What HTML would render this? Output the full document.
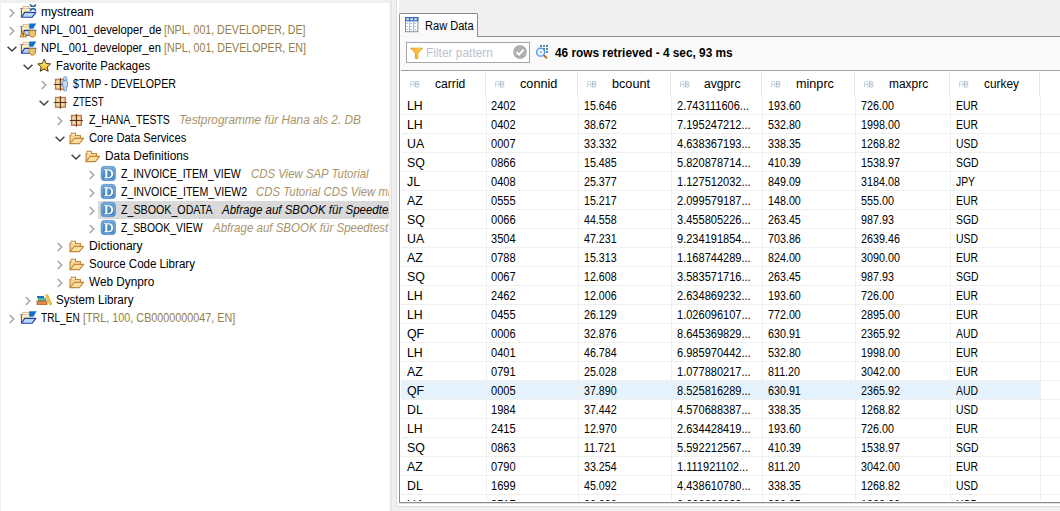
<!DOCTYPE html><html><head><meta charset="utf-8"><style>
html,body{margin:0;padding:0;}
body{width:1060px;height:511px;overflow:hidden;position:relative;background:#f0f0f0;font-family:"Liberation Sans", sans-serif;}
.t{position:absolute;white-space:pre;line-height:20px;transform-origin:0 0;}
svg{overflow:visible}

</style></head><body>
<div style="position:absolute;left:1px;top:3px;width:388px;height:508px;background:#fff;overflow:hidden">
<svg style="position:absolute;left:7px;top:4.1px" width="8" height="12" viewBox="0 0 8 12"><path d="M1.8 1.9L5.7 6L1.8 10.1" fill="none" stroke="#a6a6a6" stroke-width="1.5"/></svg>
<svg style="position:absolute;left:19px;top:1px" width="17" height="17" viewBox="0 0 17 17"><path d="M0.2 4.6h10.3" stroke="#8a7094" stroke-width="1"/>
<path d="M1.4 13.2V5.1h9.2v4" fill="#fdeeb6"/>
<path d="M3 4.6V2.4h6v2.2" fill="#fffaf0" stroke="#d8b070" stroke-width="0.9"/>
<path d="M1.4 5.2v8" stroke="#3848b0" stroke-width="1"/>
<path d="M1.6 13.3L4.6 8.4H15.9L12 13.3Z" fill="#b4daf8" stroke="#2838a8" stroke-width="1.1" stroke-linejoin="round"/><path d="M10.4 0.2C10.4 3.1 15.6 3.1 15.6 0.2M10.4 7C10.4 4 15.6 4 15.6 7" fill="none" stroke="#1a5a98" stroke-width="1.4"/></svg>
<div class="t" style="left:39.89px;top:-1.16px;font-size:12px;color:#000;font-weight:normal;font-style:normal;transform:scaleX(1.0027);">mystream</div>
<svg style="position:absolute;left:7px;top:22.1px" width="8" height="12" viewBox="0 0 8 12"><path d="M1.8 1.9L5.7 6L1.8 10.1" fill="none" stroke="#a6a6a6" stroke-width="1.5"/></svg>
<svg style="position:absolute;left:19px;top:19px" width="17" height="17" viewBox="0 0 17 17"><path d="M0.2 4.6h10.3" stroke="#8a7094" stroke-width="1"/>
<path d="M1.4 13.2V5.1h9.2v4" fill="#fdeeb6"/>
<path d="M3 4.6V2.4h6v2.2" fill="#fffaf0" stroke="#d8b070" stroke-width="0.9"/>
<path d="M1.4 5.2v8" stroke="#3848b0" stroke-width="1"/>
<path d="M1.6 13.3L4.6 8.4H15.9L12 13.3Z" fill="#b4daf8" stroke="#2838a8" stroke-width="1.1" stroke-linejoin="round"/><path d="M9.3 1.4H16.2L13.2 6.8H9.3Z" fill="#0a70c8"/><path d="M9.1 8.5h6.5v3.8q-0.5 2.2-3.25 3.1q-2.75-0.9-3.25-3.1z" fill="#f0c460" stroke="#b07820" stroke-width="0.9"/><path d="M12.6 11.6L14.6 9.4" stroke="#a8c8e8" stroke-width="0.9"/><path d="M3.2 8.6L6.6 15H-0.2Z" fill="#f6cc60" stroke="#b8802a" stroke-width="0.9" stroke-linejoin="round"/><path d="M3.2 10.6v2.4M3.2 13.4v0.9" stroke="#333" stroke-width="1"/></svg>
<div class="t" style="left:39.75px;top:16.84px;font-size:12px;color:#000;font-weight:normal;font-style:normal;transform:scaleX(0.9310);">NPL_001_developer_de</div>
<div class="t" style="left:163.28px;top:16.84px;font-size:12px;color:rgb(149,125,71);font-weight:normal;font-style:normal;transform:scaleX(0.8840);">[NPL, 001, DEVELOPER, DE]</div>
<svg style="position:absolute;left:5px;top:41.6px" width="12" height="8" viewBox="0 0 12 8"><path d="M1.6 1.8L6 6L10.4 1.8" fill="none" stroke="#404040" stroke-width="1.5"/></svg>
<svg style="position:absolute;left:19px;top:37px" width="17" height="17" viewBox="0 0 17 17"><path d="M0.2 4.6h10.3" stroke="#8a7094" stroke-width="1"/>
<path d="M1.4 13.2V5.1h9.2v4" fill="#fdeeb6"/>
<path d="M3 4.6V2.4h6v2.2" fill="#fffaf0" stroke="#d8b070" stroke-width="0.9"/>
<path d="M1.4 5.2v8" stroke="#3848b0" stroke-width="1"/>
<path d="M1.6 13.3L4.6 8.4H15.9L12 13.3Z" fill="#b4daf8" stroke="#2838a8" stroke-width="1.1" stroke-linejoin="round"/><path d="M9.3 1.4H16.2L13.2 6.8H9.3Z" fill="#0a70c8"/><path d="M9.1 8.5h6.5v3.8q-0.5 2.2-3.25 3.1q-2.75-0.9-3.25-3.1z" fill="#f0c460" stroke="#b07820" stroke-width="0.9"/><path d="M12.6 11.6L14.6 9.4" stroke="#a8c8e8" stroke-width="0.9"/></svg>
<div class="t" style="left:39.75px;top:34.84px;font-size:12px;color:#000;font-weight:normal;font-style:normal;transform:scaleX(0.9258);">NPL_001_developer_en</div>
<div class="t" style="left:163.38px;top:34.84px;font-size:12px;color:rgb(149,125,71);font-weight:normal;font-style:normal;transform:scaleX(0.8871);">[NPL, 001, DEVELOPER, EN]</div>
<svg style="position:absolute;left:21px;top:59.599999999999994px" width="12" height="8" viewBox="0 0 12 8"><path d="M1.6 1.8L6 6L10.4 1.8" fill="none" stroke="#404040" stroke-width="1.5"/></svg>
<svg style="position:absolute;left:35px;top:55px" width="16" height="16" viewBox="0 0 16 16"><defs><linearGradient id="gS" x1="0" y1="0" x2="0" y2="1"><stop offset="0" stop-color="#fff27a"/><stop offset="0.6" stop-color="#f8d040"/><stop offset="1" stop-color="#e8981c"/></linearGradient></defs>
<path d="M8.2 1.2L10.1 5.5L14.6 5.9L11.2 8.9L12.2 13.3L8.2 11L4.2 13.3L5.2 8.9L1.8 5.9L6.3 5.5Z" fill="url(#gS)" stroke="#4a3a1c" stroke-width="1" stroke-linejoin="round"/></svg>
<div class="t" style="left:55.43px;top:52.84px;font-size:12px;color:#000;font-weight:normal;font-style:normal;transform:scaleX(0.9472);">Favorite Packages</div>
<svg style="position:absolute;left:39px;top:76.1px" width="8" height="12" viewBox="0 0 8 12"><path d="M1.8 1.9L5.7 6L1.8 10.1" fill="none" stroke="#a6a6a6" stroke-width="1.5"/></svg>
<svg style="position:absolute;left:51px;top:73px" width="17" height="16" viewBox="0 0 17 16"><defs><radialGradient id="gQ" cx="0.5" cy="0.5" r="0.65"><stop offset="0" stop-color="#fcecbc"/><stop offset="1" stop-color="#dca874"/></radialGradient></defs>
<rect x="3.4" y="3.3" width="10" height="10" fill="#c88a5a"/>
<rect x="3.9" y="3.8" width="4.5" height="4.6" fill="url(#gQ)"/><rect x="8.4" y="3.8" width="4.5" height="4.6" fill="url(#gQ)"/>
<rect x="3.9" y="8.4" width="4.5" height="4.5" fill="url(#gQ)"/><rect x="8.4" y="8.4" width="4.5" height="4.5" fill="url(#gQ)"/>
<rect x="3.4" y="3.3" width="10" height="10" fill="none" stroke="#b87448" stroke-width="1"/>
<path d="M8.4 2V14.7M1.9 8.4H14.9" stroke="#5e3418" stroke-width="1.05"/><circle cx="13.1" cy="2.6" r="1.9" fill="#c4dcf4" stroke="#5a8ac8" stroke-width="0.8"/>
<path d="M10.6 6.2q0-1.6 1.6-1.6h1.8q1.6 0 1.6 1.6v4.2h-1.2v4.4h-2.6v-4.4h-1.2z" fill="#c4dcf4" stroke="#5a8ac8" stroke-width="0.8"/></svg>
<div class="t" style="left:72.00px;top:70.84px;font-size:12px;color:#000;font-weight:normal;font-style:normal;transform:scaleX(0.8890);">$TMP - DEVELOPER</div>
<svg style="position:absolute;left:37px;top:95.6px" width="12" height="8" viewBox="0 0 12 8"><path d="M1.6 1.8L6 6L10.4 1.8" fill="none" stroke="#404040" stroke-width="1.5"/></svg>
<svg style="position:absolute;left:51px;top:91px" width="17" height="16" viewBox="0 0 17 16"><defs><radialGradient id="gQ" cx="0.5" cy="0.5" r="0.65"><stop offset="0" stop-color="#fcecbc"/><stop offset="1" stop-color="#dca874"/></radialGradient></defs>
<rect x="3.4" y="3.3" width="10" height="10" fill="#c88a5a"/>
<rect x="3.9" y="3.8" width="4.5" height="4.6" fill="url(#gQ)"/><rect x="8.4" y="3.8" width="4.5" height="4.6" fill="url(#gQ)"/>
<rect x="3.9" y="8.4" width="4.5" height="4.5" fill="url(#gQ)"/><rect x="8.4" y="8.4" width="4.5" height="4.5" fill="url(#gQ)"/>
<rect x="3.4" y="3.3" width="10" height="10" fill="none" stroke="#b87448" stroke-width="1"/>
<path d="M8.4 2V14.7M1.9 8.4H14.9" stroke="#5e3418" stroke-width="1.05"/></svg>
<div class="t" style="left:72.03px;top:88.84px;font-size:12px;color:#000;font-weight:normal;font-style:normal;transform:scaleX(0.8096);">ZTEST</div>
<svg style="position:absolute;left:55px;top:112.1px" width="8" height="12" viewBox="0 0 8 12"><path d="M1.8 1.9L5.7 6L1.8 10.1" fill="none" stroke="#a6a6a6" stroke-width="1.5"/></svg>
<svg style="position:absolute;left:67px;top:109px" width="17" height="16" viewBox="0 0 17 16"><defs><radialGradient id="gQ" cx="0.5" cy="0.5" r="0.65"><stop offset="0" stop-color="#fcecbc"/><stop offset="1" stop-color="#dca874"/></radialGradient></defs>
<rect x="3.4" y="3.3" width="10" height="10" fill="#c88a5a"/>
<rect x="3.9" y="3.8" width="4.5" height="4.6" fill="url(#gQ)"/><rect x="8.4" y="3.8" width="4.5" height="4.6" fill="url(#gQ)"/>
<rect x="3.9" y="8.4" width="4.5" height="4.5" fill="url(#gQ)"/><rect x="8.4" y="8.4" width="4.5" height="4.5" fill="url(#gQ)"/>
<rect x="3.4" y="3.3" width="10" height="10" fill="none" stroke="#b87448" stroke-width="1"/>
<path d="M8.4 2V14.7M1.9 8.4H14.9" stroke="#5e3418" stroke-width="1.05"/></svg>
<div class="t" style="left:88.01px;top:106.84px;font-size:12px;color:#000;font-weight:normal;font-style:normal;transform:scaleX(0.8720);">Z_HANA_TESTS</div>
<div class="t" style="left:178.00px;top:106.84px;font-size:12px;color:rgb(168,148,104);font-weight:normal;font-style:italic;transform:scaleX(0.9832);">Testprogramme für Hana als 2. DB</div>
<svg style="position:absolute;left:53px;top:131.6px" width="12" height="8" viewBox="0 0 12 8"><path d="M1.6 1.8L6 6L10.4 1.8" fill="none" stroke="#404040" stroke-width="1.5"/></svg>
<svg style="position:absolute;left:67px;top:127px" width="16" height="16" viewBox="0 0 16 16"><path d="M2 13.5V5.5h1.2V3.2h4.3v2.3h5v3" fill="#f4d692" stroke="#c4883c" stroke-width="1.1"/>
<path d="M3.3 4.2h3.5v1.2h-3.5z" fill="#fff6dc"/>
<path d="M1.8 13.6L6.4 8.4H15.6L11.4 13.6Z" fill="#f9e0a0" stroke="#c4883c" stroke-width="1.1" stroke-linejoin="round"/></svg>
<div class="t" style="left:87.77px;top:124.84px;font-size:12px;color:#000;font-weight:normal;font-style:normal;transform:scaleX(0.9347);">Core Data Services</div>
<svg style="position:absolute;left:69px;top:149.6px" width="12" height="8" viewBox="0 0 12 8"><path d="M1.6 1.8L6 6L10.4 1.8" fill="none" stroke="#404040" stroke-width="1.5"/></svg>
<svg style="position:absolute;left:83px;top:145px" width="16" height="16" viewBox="0 0 16 16"><path d="M2 13.5V5.5h1.2V3.2h4.3v2.3h5v3" fill="#f4d692" stroke="#c4883c" stroke-width="1.1"/>
<path d="M3.3 4.2h3.5v1.2h-3.5z" fill="#fff6dc"/>
<path d="M1.8 13.6L6.4 8.4H15.6L11.4 13.6Z" fill="#f9e0a0" stroke="#c4883c" stroke-width="1.1" stroke-linejoin="round"/></svg>
<div class="t" style="left:104.10px;top:142.84px;font-size:12px;color:#000;font-weight:normal;font-style:normal;transform:scaleX(0.9890);">Data Definitions</div>
<svg style="position:absolute;left:87px;top:166.1px" width="8" height="12" viewBox="0 0 8 12"><path d="M1.8 1.9L5.7 6L1.8 10.1" fill="none" stroke="#a6a6a6" stroke-width="1.5"/></svg>
<svg style="position:absolute;left:99px;top:163px" width="16" height="16" viewBox="0 0 16 16"><defs><linearGradient id="gD" x1="0" y1="0" x2="0" y2="1"><stop offset="0" stop-color="#6aa6d8"/><stop offset="0.5" stop-color="#4c8cc8"/><stop offset="1" stop-color="#3a7cc0"/></linearGradient></defs>
<rect x="1.2" y="0.4" width="14.2" height="14.2" rx="3.2" fill="url(#gD)" stroke="#5a94c8" stroke-width="0.9"/>
<rect x="2.3" y="1.5" width="12" height="12" rx="2.4" fill="none" stroke="#8cbce0" stroke-width="0.7" opacity="0.8"/>
<path d="M4 3.2h4.6c3 0 4.6 1.9 4.6 4.5s-1.6 4.6-4.6 4.6H4v-0.9h1.3V4.1H4z M7.3 4.2v7.1h1.1c1.9 0 2.8-1.4 2.8-3.6S10.3 4.2 8.4 4.2z" fill="#fff"/></svg>
<div class="t" style="left:119.61px;top:160.84px;font-size:12px;color:#000;font-weight:normal;font-style:normal;transform:scaleX(0.8809);">Z_INVOICE_ITEM_VIEW</div>
<div class="t" style="left:249.53px;top:160.84px;font-size:12px;color:rgb(168,148,104);font-weight:normal;font-style:italic;transform:scaleX(0.9496);">CDS View SAP Tutorial</div>
<svg style="position:absolute;left:87px;top:184.1px" width="8" height="12" viewBox="0 0 8 12"><path d="M1.8 1.9L5.7 6L1.8 10.1" fill="none" stroke="#a6a6a6" stroke-width="1.5"/></svg>
<svg style="position:absolute;left:99px;top:181px" width="16" height="16" viewBox="0 0 16 16"><defs><linearGradient id="gD" x1="0" y1="0" x2="0" y2="1"><stop offset="0" stop-color="#6aa6d8"/><stop offset="0.5" stop-color="#4c8cc8"/><stop offset="1" stop-color="#3a7cc0"/></linearGradient></defs>
<rect x="1.2" y="0.4" width="14.2" height="14.2" rx="3.2" fill="url(#gD)" stroke="#5a94c8" stroke-width="0.9"/>
<rect x="2.3" y="1.5" width="12" height="12" rx="2.4" fill="none" stroke="#8cbce0" stroke-width="0.7" opacity="0.8"/>
<path d="M4 3.2h4.6c3 0 4.6 1.9 4.6 4.5s-1.6 4.6-4.6 4.6H4v-0.9h1.3V4.1H4z M7.3 4.2v7.1h1.1c1.9 0 2.8-1.4 2.8-3.6S10.3 4.2 8.4 4.2z" fill="#fff"/></svg>
<div class="t" style="left:119.61px;top:178.84px;font-size:12px;color:#000;font-weight:normal;font-style:normal;transform:scaleX(0.8846);">Z_INVOICE_ITEM_VIEW2</div>
<div class="t" style="left:255.33px;top:178.84px;font-size:12px;color:rgb(168,148,104);font-weight:normal;font-style:italic;transform:scaleX(0.9496);">CDS Tutorial CDS View mit Assoziation</div>
<div style="position:absolute;left:97px;top:198px;width:291px;height:18px;background:#d9d9d9;"></div>
<svg style="position:absolute;left:87px;top:202.1px" width="8" height="12" viewBox="0 0 8 12"><path d="M1.8 1.9L5.7 6L1.8 10.1" fill="none" stroke="#a6a6a6" stroke-width="1.5"/></svg>
<svg style="position:absolute;left:99px;top:199px" width="16" height="16" viewBox="0 0 16 16"><defs><linearGradient id="gD" x1="0" y1="0" x2="0" y2="1"><stop offset="0" stop-color="#6aa6d8"/><stop offset="0.5" stop-color="#4c8cc8"/><stop offset="1" stop-color="#3a7cc0"/></linearGradient></defs>
<rect x="1.2" y="0.4" width="14.2" height="14.2" rx="3.2" fill="url(#gD)" stroke="#5a94c8" stroke-width="0.9"/>
<rect x="2.3" y="1.5" width="12" height="12" rx="2.4" fill="none" stroke="#8cbce0" stroke-width="0.7" opacity="0.8"/>
<path d="M4 3.2h4.6c3 0 4.6 1.9 4.6 4.5s-1.6 4.6-4.6 4.6H4v-0.9h1.3V4.1H4z M7.3 4.2v7.1h1.1c1.9 0 2.8-1.4 2.8-3.6S10.3 4.2 8.4 4.2z" fill="#fff"/></svg>
<div class="t" style="left:119.61px;top:196.84px;font-size:12px;color:#000;font-weight:normal;font-style:normal;transform:scaleX(0.8892);">Z_SBOOK_ODATA</div>
<div class="t" style="left:221.49px;top:196.84px;font-size:12px;color:#000;font-weight:normal;font-style:italic;transform:scaleX(0.9590);">Abfrage auf SBOOK für Speedtest</div>
<svg style="position:absolute;left:87px;top:220.1px" width="8" height="12" viewBox="0 0 8 12"><path d="M1.8 1.9L5.7 6L1.8 10.1" fill="none" stroke="#a6a6a6" stroke-width="1.5"/></svg>
<svg style="position:absolute;left:99px;top:217px" width="16" height="16" viewBox="0 0 16 16"><defs><linearGradient id="gD" x1="0" y1="0" x2="0" y2="1"><stop offset="0" stop-color="#6aa6d8"/><stop offset="0.5" stop-color="#4c8cc8"/><stop offset="1" stop-color="#3a7cc0"/></linearGradient></defs>
<rect x="1.2" y="0.4" width="14.2" height="14.2" rx="3.2" fill="url(#gD)" stroke="#5a94c8" stroke-width="0.9"/>
<rect x="2.3" y="1.5" width="12" height="12" rx="2.4" fill="none" stroke="#8cbce0" stroke-width="0.7" opacity="0.8"/>
<path d="M4 3.2h4.6c3 0 4.6 1.9 4.6 4.5s-1.6 4.6-4.6 4.6H4v-0.9h1.3V4.1H4z M7.3 4.2v7.1h1.1c1.9 0 2.8-1.4 2.8-3.6S10.3 4.2 8.4 4.2z" fill="#fff"/></svg>
<div class="t" style="left:119.61px;top:214.84px;font-size:12px;color:#000;font-weight:normal;font-style:normal;transform:scaleX(0.8671);">Z_SBOOK_VIEW</div>
<div class="t" style="left:211.69px;top:214.84px;font-size:12px;color:rgb(168,148,104);font-weight:normal;font-style:italic;transform:scaleX(0.9590);">Abfrage auf SBOOK für Speedtest</div>
<svg style="position:absolute;left:55px;top:238.1px" width="8" height="12" viewBox="0 0 8 12"><path d="M1.8 1.9L5.7 6L1.8 10.1" fill="none" stroke="#a6a6a6" stroke-width="1.5"/></svg>
<svg style="position:absolute;left:67px;top:235px" width="16" height="16" viewBox="0 0 16 16"><path d="M2 13.5V5.5h1.2V3.2h4.3v2.3h5v3" fill="#f4d692" stroke="#c4883c" stroke-width="1.1"/>
<path d="M3.3 4.2h3.5v1.2h-3.5z" fill="#fff6dc"/>
<path d="M1.8 13.6L6.4 8.4H15.6L11.4 13.6Z" fill="#f9e0a0" stroke="#c4883c" stroke-width="1.1" stroke-linejoin="round"/></svg>
<div class="t" style="left:87.59px;top:232.84px;font-size:12px;color:#000;font-weight:normal;font-style:normal;transform:scaleX(1.0057);">Dictionary</div>
<svg style="position:absolute;left:55px;top:256.1px" width="8" height="12" viewBox="0 0 8 12"><path d="M1.8 1.9L5.7 6L1.8 10.1" fill="none" stroke="#a6a6a6" stroke-width="1.5"/></svg>
<svg style="position:absolute;left:67px;top:253px" width="16" height="16" viewBox="0 0 16 16"><path d="M2 13.5V5.5h1.2V3.2h4.3v2.3h5v3" fill="#f4d692" stroke="#c4883c" stroke-width="1.1"/>
<path d="M3.3 4.2h3.5v1.2h-3.5z" fill="#fff6dc"/>
<path d="M1.8 13.6L6.4 8.4H15.6L11.4 13.6Z" fill="#f9e0a0" stroke="#c4883c" stroke-width="1.1" stroke-linejoin="round"/></svg>
<div class="t" style="left:87.62px;top:250.84px;font-size:12px;color:#000;font-weight:normal;font-style:normal;transform:scaleX(0.9624);">Source Code Library</div>
<svg style="position:absolute;left:55px;top:274.1px" width="8" height="12" viewBox="0 0 8 12"><path d="M1.8 1.9L5.7 6L1.8 10.1" fill="none" stroke="#a6a6a6" stroke-width="1.5"/></svg>
<svg style="position:absolute;left:67px;top:271px" width="16" height="16" viewBox="0 0 16 16"><path d="M2 13.5V5.5h1.2V3.2h4.3v2.3h5v3" fill="#f4d692" stroke="#c4883c" stroke-width="1.1"/>
<path d="M3.3 4.2h3.5v1.2h-3.5z" fill="#fff6dc"/>
<path d="M1.8 13.6L6.4 8.4H15.6L11.4 13.6Z" fill="#f9e0a0" stroke="#c4883c" stroke-width="1.1" stroke-linejoin="round"/></svg>
<div class="t" style="left:88.35px;top:268.84px;font-size:12px;color:#000;font-weight:normal;font-style:normal;transform:scaleX(0.9827);">Web Dynpro</div>
<svg style="position:absolute;left:23px;top:292.1px" width="8" height="12" viewBox="0 0 8 12"><path d="M1.8 1.9L5.7 6L1.8 10.1" fill="none" stroke="#a6a6a6" stroke-width="1.5"/></svg>
<svg style="position:absolute;left:35px;top:289px" width="17" height="16" viewBox="0 0 17 16"><rect x="1" y="4" width="7" height="2.2" fill="#2070c0"/>
<rect x="2" y="6.2" width="8" height="2.9" fill="#30a070"/><rect x="3" y="7.2" width="6" height="0.9" fill="#80d0a8"/>
<rect x="1" y="9.1" width="10" height="3.4" fill="#e08a48" stroke="#b85a28" stroke-width="0.8"/>
<path d="M10.4 2.6L14.9 13" stroke="#e0a030" stroke-width="2.8"/><path d="M10.4 2.6L14.9 13" stroke="#f4c848" stroke-width="1.4"/></svg>
<div class="t" style="left:55.32px;top:286.84px;font-size:12px;color:#000;font-weight:normal;font-style:normal;transform:scaleX(0.9684);">System Library</div>
<svg style="position:absolute;left:7px;top:310.1px" width="8" height="12" viewBox="0 0 8 12"><path d="M1.8 1.9L5.7 6L1.8 10.1" fill="none" stroke="#a6a6a6" stroke-width="1.5"/></svg>
<svg style="position:absolute;left:19px;top:307px" width="17" height="17" viewBox="0 0 17 17"><path d="M0.2 4.6h10.3" stroke="#8a7094" stroke-width="1"/>
<path d="M1.4 13.2V5.1h9.2v4" fill="#fdeeb6"/>
<path d="M3 4.6V2.4h6v2.2" fill="#fffaf0" stroke="#d8b070" stroke-width="0.9"/>
<path d="M1.4 5.2v8" stroke="#3848b0" stroke-width="1"/>
<path d="M1.6 13.3L4.6 8.4H15.9L12 13.3Z" fill="#b4daf8" stroke="#2838a8" stroke-width="1.1" stroke-linejoin="round"/><path d="M9.3 1.2H16.6L13.4 6.8H9.3Z" fill="#0a70c8"/></svg>
<div class="t" style="left:40.26px;top:304.84px;font-size:12px;color:#000;font-weight:normal;font-style:normal;transform:scaleX(0.8415);">TRL_EN</div>
<div class="t" style="left:82.17px;top:304.84px;font-size:12px;color:rgb(149,125,71);font-weight:normal;font-style:normal;transform:scaleX(0.8988);">[TRL, 100, CB0000000047, EN]</div>
</div>
<div style="position:absolute;left:391px;top:0px;width:1px;height:511px;background:#e2e2e2;"></div>
<div style="position:absolute;left:396px;top:0px;width:1px;height:507px;background:#dcdcdc;"></div>
<div style="position:absolute;left:397px;top:0px;width:2px;height:506px;background:#ffffff;"></div>
<div style="position:absolute;left:396px;top:506px;width:664px;height:1px;background:#dcdcdc;"></div>
<div style="position:absolute;left:397px;top:503px;width:663px;height:3px;background:#ffffff;"></div>
<div style="position:absolute;left:399px;top:37px;width:661px;height:466px;background:#fafafa;"></div>
<div style="position:absolute;left:399px;top:13px;width:77px;height:23px;border:1px solid #8c8c8c;border-bottom:none;border-radius:2px 2px 0 0;background:linear-gradient(#ffffff,#f8f8f8)"></div>
<div style="position:absolute;left:477px;top:36px;width:583px;height:1px;background:#8c8c8c;"></div>
<div style="position:absolute;left:399px;top:15px;width:1px;height:488px;background:#8c8c8c;"></div>
<div style="position:absolute;left:400px;top:501px;width:660px;height:1px;background:#fff;"></div>
<div style="position:absolute;left:399px;top:502px;width:661px;height:1px;background:#8c8c8c;"></div>
<div style="position:absolute;left:400px;top:503px;width:660px;height:1px;background:#e0e0e0;"></div>
<svg style="position:absolute;left:405px;top:17px" width="14" height="16" viewBox="0 0 14 16"><rect x="0.5" y="0.5" width="12.4" height="14.2" fill="#fff" stroke="#8c8c8c" stroke-width="1"/>
<rect x="0" y="0" width="13.4" height="4.4" fill="#3f6fb6"/>
<rect x="1.4" y="1.3" width="2.5" height="1.9" fill="#dcecfc"/><rect x="5.4" y="1.3" width="2.5" height="1.9" fill="#dcecfc"/><rect x="9.3" y="1.3" width="2.5" height="1.9" fill="#dcecfc"/>
<path d="M4.6 4.4v10M8.6 4.4v10" stroke="#9cb4e4" stroke-width="1"/>
<path d="M1.2 6.5h2M5.2 6.5h2M9.2 6.5h2M1.2 9.5h2M5.2 9.5h2M9.2 9.5h2M1.2 12.5h2M5.2 12.5h2M9.2 12.5h2" stroke="#a8c0ea" stroke-width="1"/></svg>
<div class="t" style="left:424.84px;top:15.54px;font-size:12px;color:#000;font-weight:normal;font-style:normal;transform:scaleX(0.9215);">Raw Data</div>
<div style="position:absolute;left:406px;top:42px;width:122px;height:19px;border:1px solid #a5a5ab;background:#fff"></div>
<svg style="position:absolute;left:410px;top:47px" width="14" height="13" viewBox="0 0 14 13"><defs><linearGradient id="gF" x1="0" y1="0" x2="1" y2="0"><stop offset="0" stop-color="#ff9a40"/><stop offset="1" stop-color="#ffe030"/></linearGradient></defs>
<path d="M0.6 1.2H12.6L7.8 6.2V11.6H5.4V6.2Z" fill="url(#gF)" stroke="#dc9c18" stroke-width="0.9" stroke-linejoin="round"/><path d="M2.8 2.6L4 3.8" stroke="#fff" stroke-width="1" opacity="0.9"/><path d="M5 1.8H11" stroke="#ffd070" stroke-width="0.6"/></svg>
<div class="t" style="left:426.01px;top:42.74px;font-size:12px;color:#c0bece;font-weight:normal;font-style:normal;transform:scaleX(0.9940);">Filter pattern</div>
<svg style="position:absolute;left:513px;top:45px" width="14" height="14" viewBox="0 0 14 14"><circle cx="7" cy="7" r="6.9" fill="#b0b0b0"/><path d="M3.6 7.2L6 9.6L10.6 4.8" fill="none" stroke="#fff" stroke-width="2"/></svg>
<svg style="position:absolute;left:534px;top:44px" width="16" height="16" viewBox="0 0 16 16"><g fill="#5a86a8"><rect x="6" y="1" width="2" height="2"/><rect x="9" y="1" width="2" height="2"/><rect x="12" y="1" width="2" height="2"/>
<rect x="9" y="4" width="2" height="2"/><rect x="12" y="4" width="2" height="2"/><rect x="12" y="7" width="2" height="2"/><rect x="6" y="7" width="2" height="2"/></g>
<path d="M9.8 11.2L13 14.4" stroke="#b8702a" stroke-width="2"/>
<circle cx="6.6" cy="8.2" r="4" fill="rgba(220,240,255,0.6)" stroke="#4a90e2" stroke-width="1.3"/></svg>
<div class="t" style="left:555.19px;top:42.94px;font-size:12px;color:#000;font-weight:bold;font-style:normal;transform:scaleX(0.9864);">46 rows retrieved - 4 sec, 93 ms</div>
<div style="position:absolute;left:400px;top:70px;width:660px;height:431px;background:#fff;overflow:hidden">
<div style="position:absolute;left:1px;top:0px;width:659px;height:1px;background:#a0a0a0;"></div>
<div style="position:absolute;left:85px;top:2px;width:1px;height:24px;background:#e5e5e5;"></div>
<svg style="position:absolute;left:10px;top:11px" width="10" height="7" viewBox="0 0 10 7"><path d="M0.5 6V1.6Q0.5 0.5 1.6 0.5H2.9Q4 0.5 4 1.6V6M0.5 3.3H4" fill="none" stroke="#c2d4e0" stroke-width="1"/><path d="M5.5 0.5H7.8Q8.6 0.5 8.6 1.4V2.3Q8.6 3.1 7.8 3.1H5.5M5.5 3.1H8Q8.9 3.1 8.9 4V5.1Q8.9 6 8 6H5.5V0.5" fill="none" stroke="#acc4d2" stroke-width="1"/></svg>
<div class="t" style="left:34.81px;top:4.14px;font-size:12px;color:#000;font-weight:normal;font-style:normal;transform:scaleX(1.0114);">carrid</div>
<div style="position:absolute;left:177px;top:2px;width:1px;height:24px;background:#e5e5e5;"></div>
<svg style="position:absolute;left:95px;top:11px" width="10" height="7" viewBox="0 0 10 7"><path d="M0.5 6V1.6Q0.5 0.5 1.6 0.5H2.9Q4 0.5 4 1.6V6M0.5 3.3H4" fill="none" stroke="#c2d4e0" stroke-width="1"/><path d="M5.5 0.5H7.8Q8.6 0.5 8.6 1.4V2.3Q8.6 3.1 7.8 3.1H5.5M5.5 3.1H8Q8.9 3.1 8.9 4V5.1Q8.9 6 8 6H5.5V0.5" fill="none" stroke="#acc4d2" stroke-width="1"/></svg>
<div class="t" style="left:119.85px;top:4.14px;font-size:12px;color:#000;font-weight:normal;font-style:normal;transform:scaleX(1.0588);">connid</div>
<div style="position:absolute;left:270px;top:2px;width:1px;height:24px;background:#e5e5e5;"></div>
<svg style="position:absolute;left:187px;top:11px" width="10" height="7" viewBox="0 0 10 7"><path d="M0.5 6V1.6Q0.5 0.5 1.6 0.5H2.9Q4 0.5 4 1.6V6M0.5 3.3H4" fill="none" stroke="#c2d4e0" stroke-width="1"/><path d="M5.5 0.5H7.8Q8.6 0.5 8.6 1.4V2.3Q8.6 3.1 7.8 3.1H5.5M5.5 3.1H8Q8.9 3.1 8.9 4V5.1Q8.9 6 8 6H5.5V0.5" fill="none" stroke="#acc4d2" stroke-width="1"/></svg>
<div class="t" style="left:211.94px;top:4.14px;font-size:12px;color:#000;font-weight:normal;font-style:normal;transform:scaleX(1.0543);">bcount</div>
<div style="position:absolute;left:361px;top:2px;width:1px;height:24px;background:#e5e5e5;"></div>
<svg style="position:absolute;left:280px;top:11px" width="10" height="7" viewBox="0 0 10 7"><path d="M0.5 6V1.6Q0.5 0.5 1.6 0.5H2.9Q4 0.5 4 1.6V6M0.5 3.3H4" fill="none" stroke="#c2d4e0" stroke-width="1"/><path d="M5.5 0.5H7.8Q8.6 0.5 8.6 1.4V2.3Q8.6 3.1 7.8 3.1H5.5M5.5 3.1H8Q8.9 3.1 8.9 4V5.1Q8.9 6 8 6H5.5V0.5" fill="none" stroke="#acc4d2" stroke-width="1"/></svg>
<div class="t" style="left:304.48px;top:4.14px;font-size:12px;color:#000;font-weight:normal;font-style:normal;transform:scaleX(1.0127);">avgprc</div>
<div style="position:absolute;left:454px;top:2px;width:1px;height:24px;background:#e5e5e5;"></div>
<svg style="position:absolute;left:371px;top:11px" width="10" height="7" viewBox="0 0 10 7"><path d="M0.5 6V1.6Q0.5 0.5 1.6 0.5H2.9Q4 0.5 4 1.6V6M0.5 3.3H4" fill="none" stroke="#c2d4e0" stroke-width="1"/><path d="M5.5 0.5H7.8Q8.6 0.5 8.6 1.4V2.3Q8.6 3.1 7.8 3.1H5.5M5.5 3.1H8Q8.9 3.1 8.9 4V5.1Q8.9 6 8 6H5.5V0.5" fill="none" stroke="#acc4d2" stroke-width="1"/></svg>
<div class="t" style="left:395.82px;top:4.14px;font-size:12px;color:#000;font-weight:normal;font-style:normal;transform:scaleX(1.0535);">minprc</div>
<div style="position:absolute;left:549px;top:2px;width:1px;height:24px;background:#e5e5e5;"></div>
<svg style="position:absolute;left:464px;top:11px" width="10" height="7" viewBox="0 0 10 7"><path d="M0.5 6V1.6Q0.5 0.5 1.6 0.5H2.9Q4 0.5 4 1.6V6M0.5 3.3H4" fill="none" stroke="#c2d4e0" stroke-width="1"/><path d="M5.5 0.5H7.8Q8.6 0.5 8.6 1.4V2.3Q8.6 3.1 7.8 3.1H5.5M5.5 3.1H8Q8.9 3.1 8.9 4V5.1Q8.9 6 8 6H5.5V0.5" fill="none" stroke="#acc4d2" stroke-width="1"/></svg>
<div class="t" style="left:488.56px;top:4.14px;font-size:12px;color:#000;font-weight:normal;font-style:normal;transform:scaleX(0.9936);">maxprc</div>
<div style="position:absolute;left:639px;top:2px;width:1px;height:24px;background:#e5e5e5;"></div>
<svg style="position:absolute;left:559px;top:11px" width="10" height="7" viewBox="0 0 10 7"><path d="M0.5 6V1.6Q0.5 0.5 1.6 0.5H2.9Q4 0.5 4 1.6V6M0.5 3.3H4" fill="none" stroke="#c2d4e0" stroke-width="1"/><path d="M5.5 0.5H7.8Q8.6 0.5 8.6 1.4V2.3Q8.6 3.1 7.8 3.1H5.5M5.5 3.1H8Q8.9 3.1 8.9 4V5.1Q8.9 6 8 6H5.5V0.5" fill="none" stroke="#acc4d2" stroke-width="1"/></svg>
<div class="t" style="left:583.70px;top:4.14px;font-size:12px;color:#000;font-weight:normal;font-style:normal;transform:scaleX(0.9886);">curkey</div>
<div style="position:absolute;left:1px;top:311px;width:639px;height:18px;background:#e5f3ff;"></div>
<div style="position:absolute;left:1px;top:44px;width:659px;height:1px;background:#f0f0f0;"></div>
<div style="position:absolute;left:1px;top:63px;width:659px;height:1px;background:#f0f0f0;"></div>
<div style="position:absolute;left:1px;top:82px;width:659px;height:1px;background:#f0f0f0;"></div>
<div style="position:absolute;left:1px;top:101px;width:659px;height:1px;background:#f0f0f0;"></div>
<div style="position:absolute;left:1px;top:120px;width:659px;height:1px;background:#f0f0f0;"></div>
<div style="position:absolute;left:1px;top:139px;width:659px;height:1px;background:#f0f0f0;"></div>
<div style="position:absolute;left:1px;top:158px;width:659px;height:1px;background:#f0f0f0;"></div>
<div style="position:absolute;left:1px;top:177px;width:659px;height:1px;background:#f0f0f0;"></div>
<div style="position:absolute;left:1px;top:196px;width:659px;height:1px;background:#f0f0f0;"></div>
<div style="position:absolute;left:1px;top:215px;width:659px;height:1px;background:#f0f0f0;"></div>
<div style="position:absolute;left:1px;top:234px;width:659px;height:1px;background:#f0f0f0;"></div>
<div style="position:absolute;left:1px;top:253px;width:659px;height:1px;background:#f0f0f0;"></div>
<div style="position:absolute;left:1px;top:272px;width:659px;height:1px;background:#f0f0f0;"></div>
<div style="position:absolute;left:1px;top:291px;width:659px;height:1px;background:#f0f0f0;"></div>
<div style="position:absolute;left:1px;top:310px;width:659px;height:1px;background:#f0f0f0;"></div>
<div style="position:absolute;left:1px;top:329px;width:659px;height:1px;background:#f0f0f0;"></div>
<div style="position:absolute;left:1px;top:348px;width:659px;height:1px;background:#f0f0f0;"></div>
<div style="position:absolute;left:1px;top:367px;width:659px;height:1px;background:#f0f0f0;"></div>
<div style="position:absolute;left:1px;top:386px;width:659px;height:1px;background:#f0f0f0;"></div>
<div style="position:absolute;left:1px;top:405px;width:659px;height:1px;background:#f0f0f0;"></div>
<div style="position:absolute;left:1px;top:424px;width:659px;height:1px;background:#f0f0f0;"></div>
<div style="position:absolute;left:1px;top:443px;width:659px;height:1px;background:#f0f0f0;"></div>
<div style="position:absolute;left:86px;top:26px;width:1px;height:420px;background:#f0f0f0;"></div>
<div style="position:absolute;left:178px;top:26px;width:1px;height:420px;background:#f0f0f0;"></div>
<div style="position:absolute;left:271px;top:26px;width:1px;height:420px;background:#f0f0f0;"></div>
<div style="position:absolute;left:362px;top:26px;width:1px;height:420px;background:#f0f0f0;"></div>
<div style="position:absolute;left:455px;top:26px;width:1px;height:420px;background:#f0f0f0;"></div>
<div style="position:absolute;left:550px;top:26px;width:1px;height:420px;background:#f0f0f0;"></div>
<div style="position:absolute;left:640px;top:26px;width:1px;height:420px;background:#f0f0f0;"></div>
<div class="t" style="left:6.57px;top:25.84px;font-size:12px;color:#000;font-weight:normal;font-style:normal;transform:scaleX(1.0288);">LH</div>
<div class="t" style="left:91.34px;top:25.84px;font-size:12px;color:#000;font-weight:normal;font-style:normal;transform:scaleX(0.9222);">2402</div>
<div class="t" style="left:184.28px;top:25.84px;font-size:12px;color:#000;font-weight:normal;font-style:normal;transform:scaleX(0.8896);">15.646</div>
<div class="t" style="left:276.86px;top:25.84px;font-size:12px;color:#000;font-weight:normal;font-style:normal;transform:scaleX(0.9201);">2.743111606...</div>
<div class="t" style="left:368.03px;top:25.84px;font-size:12px;color:#000;font-weight:normal;font-style:normal;transform:scaleX(0.8947);">193.60</div>
<div class="t" style="left:461.18px;top:25.84px;font-size:12px;color:#000;font-weight:normal;font-style:normal;transform:scaleX(0.8960);">726.00</div>
<div class="t" style="left:555.90px;top:25.84px;font-size:12px;color:#000;font-weight:normal;font-style:normal;transform:scaleX(0.8658);">EUR</div>
<div class="t" style="left:6.57px;top:44.84px;font-size:12px;color:#000;font-weight:normal;font-style:normal;transform:scaleX(1.0288);">LH</div>
<div class="t" style="left:91.34px;top:44.84px;font-size:12px;color:#000;font-weight:normal;font-style:normal;transform:scaleX(0.9222);">0402</div>
<div class="t" style="left:184.28px;top:44.84px;font-size:12px;color:#000;font-weight:normal;font-style:normal;transform:scaleX(0.8896);">38.672</div>
<div class="t" style="left:276.86px;top:44.84px;font-size:12px;color:#000;font-weight:normal;font-style:normal;transform:scaleX(0.9201);">7.195247212...</div>
<div class="t" style="left:368.03px;top:44.84px;font-size:12px;color:#000;font-weight:normal;font-style:normal;transform:scaleX(0.8947);">532.80</div>
<div class="t" style="left:461.18px;top:44.84px;font-size:12px;color:#000;font-weight:normal;font-style:normal;transform:scaleX(0.8960);">1998.00</div>
<div class="t" style="left:555.90px;top:44.84px;font-size:12px;color:#000;font-weight:normal;font-style:normal;transform:scaleX(0.8658);">EUR</div>
<div class="t" style="left:6.57px;top:63.84px;font-size:12px;color:#000;font-weight:normal;font-style:normal;transform:scaleX(1.0288);">UA</div>
<div class="t" style="left:91.34px;top:63.84px;font-size:12px;color:#000;font-weight:normal;font-style:normal;transform:scaleX(0.9222);">0007</div>
<div class="t" style="left:184.28px;top:63.84px;font-size:12px;color:#000;font-weight:normal;font-style:normal;transform:scaleX(0.8896);">33.332</div>
<div class="t" style="left:276.86px;top:63.84px;font-size:12px;color:#000;font-weight:normal;font-style:normal;transform:scaleX(0.9201);">4.638367193...</div>
<div class="t" style="left:368.03px;top:63.84px;font-size:12px;color:#000;font-weight:normal;font-style:normal;transform:scaleX(0.8947);">338.35</div>
<div class="t" style="left:461.18px;top:63.84px;font-size:12px;color:#000;font-weight:normal;font-style:normal;transform:scaleX(0.8960);">1268.82</div>
<div class="t" style="left:555.90px;top:63.84px;font-size:12px;color:#000;font-weight:normal;font-style:normal;transform:scaleX(0.8658);">USD</div>
<div class="t" style="left:6.57px;top:82.84px;font-size:12px;color:#000;font-weight:normal;font-style:normal;transform:scaleX(1.0288);">SQ</div>
<div class="t" style="left:91.34px;top:82.84px;font-size:12px;color:#000;font-weight:normal;font-style:normal;transform:scaleX(0.9222);">0866</div>
<div class="t" style="left:184.28px;top:82.84px;font-size:12px;color:#000;font-weight:normal;font-style:normal;transform:scaleX(0.8896);">15.485</div>
<div class="t" style="left:276.86px;top:82.84px;font-size:12px;color:#000;font-weight:normal;font-style:normal;transform:scaleX(0.9201);">5.820878714...</div>
<div class="t" style="left:368.03px;top:82.84px;font-size:12px;color:#000;font-weight:normal;font-style:normal;transform:scaleX(0.8947);">410.39</div>
<div class="t" style="left:461.18px;top:82.84px;font-size:12px;color:#000;font-weight:normal;font-style:normal;transform:scaleX(0.8960);">1538.97</div>
<div class="t" style="left:555.90px;top:82.84px;font-size:12px;color:#000;font-weight:normal;font-style:normal;transform:scaleX(0.8658);">SGD</div>
<div class="t" style="left:6.57px;top:101.84px;font-size:12px;color:#000;font-weight:normal;font-style:normal;transform:scaleX(1.0288);">JL</div>
<div class="t" style="left:91.34px;top:101.84px;font-size:12px;color:#000;font-weight:normal;font-style:normal;transform:scaleX(0.9222);">0408</div>
<div class="t" style="left:184.28px;top:101.84px;font-size:12px;color:#000;font-weight:normal;font-style:normal;transform:scaleX(0.8896);">25.377</div>
<div class="t" style="left:276.86px;top:101.84px;font-size:12px;color:#000;font-weight:normal;font-style:normal;transform:scaleX(0.9201);">1.127512032...</div>
<div class="t" style="left:368.03px;top:101.84px;font-size:12px;color:#000;font-weight:normal;font-style:normal;transform:scaleX(0.8947);">849.09</div>
<div class="t" style="left:461.18px;top:101.84px;font-size:12px;color:#000;font-weight:normal;font-style:normal;transform:scaleX(0.8960);">3184.08</div>
<div class="t" style="left:555.90px;top:101.84px;font-size:12px;color:#000;font-weight:normal;font-style:normal;transform:scaleX(0.8658);">JPY</div>
<div class="t" style="left:6.57px;top:120.84px;font-size:12px;color:#000;font-weight:normal;font-style:normal;transform:scaleX(1.0288);">AZ</div>
<div class="t" style="left:91.34px;top:120.84px;font-size:12px;color:#000;font-weight:normal;font-style:normal;transform:scaleX(0.9222);">0555</div>
<div class="t" style="left:184.28px;top:120.84px;font-size:12px;color:#000;font-weight:normal;font-style:normal;transform:scaleX(0.8896);">15.217</div>
<div class="t" style="left:276.86px;top:120.84px;font-size:12px;color:#000;font-weight:normal;font-style:normal;transform:scaleX(0.9201);">2.099579187...</div>
<div class="t" style="left:368.03px;top:120.84px;font-size:12px;color:#000;font-weight:normal;font-style:normal;transform:scaleX(0.8947);">148.00</div>
<div class="t" style="left:461.18px;top:120.84px;font-size:12px;color:#000;font-weight:normal;font-style:normal;transform:scaleX(0.8960);">555.00</div>
<div class="t" style="left:555.90px;top:120.84px;font-size:12px;color:#000;font-weight:normal;font-style:normal;transform:scaleX(0.8658);">EUR</div>
<div class="t" style="left:6.57px;top:139.84px;font-size:12px;color:#000;font-weight:normal;font-style:normal;transform:scaleX(1.0288);">SQ</div>
<div class="t" style="left:91.34px;top:139.84px;font-size:12px;color:#000;font-weight:normal;font-style:normal;transform:scaleX(0.9222);">0066</div>
<div class="t" style="left:184.28px;top:139.84px;font-size:12px;color:#000;font-weight:normal;font-style:normal;transform:scaleX(0.8896);">44.558</div>
<div class="t" style="left:276.86px;top:139.84px;font-size:12px;color:#000;font-weight:normal;font-style:normal;transform:scaleX(0.9201);">3.455805226...</div>
<div class="t" style="left:368.03px;top:139.84px;font-size:12px;color:#000;font-weight:normal;font-style:normal;transform:scaleX(0.8947);">263.45</div>
<div class="t" style="left:461.18px;top:139.84px;font-size:12px;color:#000;font-weight:normal;font-style:normal;transform:scaleX(0.8960);">987.93</div>
<div class="t" style="left:555.90px;top:139.84px;font-size:12px;color:#000;font-weight:normal;font-style:normal;transform:scaleX(0.8658);">SGD</div>
<div class="t" style="left:6.57px;top:158.84px;font-size:12px;color:#000;font-weight:normal;font-style:normal;transform:scaleX(1.0288);">UA</div>
<div class="t" style="left:91.34px;top:158.84px;font-size:12px;color:#000;font-weight:normal;font-style:normal;transform:scaleX(0.9222);">3504</div>
<div class="t" style="left:184.28px;top:158.84px;font-size:12px;color:#000;font-weight:normal;font-style:normal;transform:scaleX(0.8896);">47.231</div>
<div class="t" style="left:276.86px;top:158.84px;font-size:12px;color:#000;font-weight:normal;font-style:normal;transform:scaleX(0.9201);">9.234191854...</div>
<div class="t" style="left:368.03px;top:158.84px;font-size:12px;color:#000;font-weight:normal;font-style:normal;transform:scaleX(0.8947);">703.86</div>
<div class="t" style="left:461.18px;top:158.84px;font-size:12px;color:#000;font-weight:normal;font-style:normal;transform:scaleX(0.8960);">2639.46</div>
<div class="t" style="left:555.90px;top:158.84px;font-size:12px;color:#000;font-weight:normal;font-style:normal;transform:scaleX(0.8658);">USD</div>
<div class="t" style="left:6.57px;top:177.84px;font-size:12px;color:#000;font-weight:normal;font-style:normal;transform:scaleX(1.0288);">AZ</div>
<div class="t" style="left:91.34px;top:177.84px;font-size:12px;color:#000;font-weight:normal;font-style:normal;transform:scaleX(0.9222);">0788</div>
<div class="t" style="left:184.28px;top:177.84px;font-size:12px;color:#000;font-weight:normal;font-style:normal;transform:scaleX(0.8896);">15.313</div>
<div class="t" style="left:276.86px;top:177.84px;font-size:12px;color:#000;font-weight:normal;font-style:normal;transform:scaleX(0.9201);">1.168744289...</div>
<div class="t" style="left:368.03px;top:177.84px;font-size:12px;color:#000;font-weight:normal;font-style:normal;transform:scaleX(0.8947);">824.00</div>
<div class="t" style="left:461.18px;top:177.84px;font-size:12px;color:#000;font-weight:normal;font-style:normal;transform:scaleX(0.8960);">3090.00</div>
<div class="t" style="left:555.90px;top:177.84px;font-size:12px;color:#000;font-weight:normal;font-style:normal;transform:scaleX(0.8658);">EUR</div>
<div class="t" style="left:6.57px;top:196.84px;font-size:12px;color:#000;font-weight:normal;font-style:normal;transform:scaleX(1.0288);">SQ</div>
<div class="t" style="left:91.34px;top:196.84px;font-size:12px;color:#000;font-weight:normal;font-style:normal;transform:scaleX(0.9222);">0067</div>
<div class="t" style="left:184.28px;top:196.84px;font-size:12px;color:#000;font-weight:normal;font-style:normal;transform:scaleX(0.8896);">12.608</div>
<div class="t" style="left:276.86px;top:196.84px;font-size:12px;color:#000;font-weight:normal;font-style:normal;transform:scaleX(0.9201);">3.583571716...</div>
<div class="t" style="left:368.03px;top:196.84px;font-size:12px;color:#000;font-weight:normal;font-style:normal;transform:scaleX(0.8947);">263.45</div>
<div class="t" style="left:461.18px;top:196.84px;font-size:12px;color:#000;font-weight:normal;font-style:normal;transform:scaleX(0.8960);">987.93</div>
<div class="t" style="left:555.90px;top:196.84px;font-size:12px;color:#000;font-weight:normal;font-style:normal;transform:scaleX(0.8658);">SGD</div>
<div class="t" style="left:6.57px;top:215.84px;font-size:12px;color:#000;font-weight:normal;font-style:normal;transform:scaleX(1.0288);">LH</div>
<div class="t" style="left:91.34px;top:215.84px;font-size:12px;color:#000;font-weight:normal;font-style:normal;transform:scaleX(0.9222);">2462</div>
<div class="t" style="left:184.28px;top:215.84px;font-size:12px;color:#000;font-weight:normal;font-style:normal;transform:scaleX(0.8896);">12.006</div>
<div class="t" style="left:276.86px;top:215.84px;font-size:12px;color:#000;font-weight:normal;font-style:normal;transform:scaleX(0.9201);">2.634869232...</div>
<div class="t" style="left:368.03px;top:215.84px;font-size:12px;color:#000;font-weight:normal;font-style:normal;transform:scaleX(0.8947);">193.60</div>
<div class="t" style="left:461.18px;top:215.84px;font-size:12px;color:#000;font-weight:normal;font-style:normal;transform:scaleX(0.8960);">726.00</div>
<div class="t" style="left:555.90px;top:215.84px;font-size:12px;color:#000;font-weight:normal;font-style:normal;transform:scaleX(0.8658);">EUR</div>
<div class="t" style="left:6.57px;top:234.84px;font-size:12px;color:#000;font-weight:normal;font-style:normal;transform:scaleX(1.0288);">LH</div>
<div class="t" style="left:91.34px;top:234.84px;font-size:12px;color:#000;font-weight:normal;font-style:normal;transform:scaleX(0.9222);">0455</div>
<div class="t" style="left:184.28px;top:234.84px;font-size:12px;color:#000;font-weight:normal;font-style:normal;transform:scaleX(0.8896);">26.129</div>
<div class="t" style="left:276.86px;top:234.84px;font-size:12px;color:#000;font-weight:normal;font-style:normal;transform:scaleX(0.9201);">1.026096107...</div>
<div class="t" style="left:368.03px;top:234.84px;font-size:12px;color:#000;font-weight:normal;font-style:normal;transform:scaleX(0.8947);">772.00</div>
<div class="t" style="left:461.18px;top:234.84px;font-size:12px;color:#000;font-weight:normal;font-style:normal;transform:scaleX(0.8960);">2895.00</div>
<div class="t" style="left:555.90px;top:234.84px;font-size:12px;color:#000;font-weight:normal;font-style:normal;transform:scaleX(0.8658);">EUR</div>
<div class="t" style="left:6.57px;top:253.84px;font-size:12px;color:#000;font-weight:normal;font-style:normal;transform:scaleX(1.0288);">QF</div>
<div class="t" style="left:91.34px;top:253.84px;font-size:12px;color:#000;font-weight:normal;font-style:normal;transform:scaleX(0.9222);">0006</div>
<div class="t" style="left:184.28px;top:253.84px;font-size:12px;color:#000;font-weight:normal;font-style:normal;transform:scaleX(0.8896);">32.876</div>
<div class="t" style="left:276.86px;top:253.84px;font-size:12px;color:#000;font-weight:normal;font-style:normal;transform:scaleX(0.9201);">8.645369829...</div>
<div class="t" style="left:368.03px;top:253.84px;font-size:12px;color:#000;font-weight:normal;font-style:normal;transform:scaleX(0.8947);">630.91</div>
<div class="t" style="left:461.18px;top:253.84px;font-size:12px;color:#000;font-weight:normal;font-style:normal;transform:scaleX(0.8960);">2365.92</div>
<div class="t" style="left:555.90px;top:253.84px;font-size:12px;color:#000;font-weight:normal;font-style:normal;transform:scaleX(0.8658);">AUD</div>
<div class="t" style="left:6.57px;top:272.84px;font-size:12px;color:#000;font-weight:normal;font-style:normal;transform:scaleX(1.0288);">LH</div>
<div class="t" style="left:91.34px;top:272.84px;font-size:12px;color:#000;font-weight:normal;font-style:normal;transform:scaleX(0.9222);">0401</div>
<div class="t" style="left:184.28px;top:272.84px;font-size:12px;color:#000;font-weight:normal;font-style:normal;transform:scaleX(0.8896);">46.784</div>
<div class="t" style="left:276.86px;top:272.84px;font-size:12px;color:#000;font-weight:normal;font-style:normal;transform:scaleX(0.9201);">6.985970442...</div>
<div class="t" style="left:368.03px;top:272.84px;font-size:12px;color:#000;font-weight:normal;font-style:normal;transform:scaleX(0.8947);">532.80</div>
<div class="t" style="left:461.18px;top:272.84px;font-size:12px;color:#000;font-weight:normal;font-style:normal;transform:scaleX(0.8960);">1998.00</div>
<div class="t" style="left:555.90px;top:272.84px;font-size:12px;color:#000;font-weight:normal;font-style:normal;transform:scaleX(0.8658);">EUR</div>
<div class="t" style="left:6.57px;top:291.84px;font-size:12px;color:#000;font-weight:normal;font-style:normal;transform:scaleX(1.0288);">AZ</div>
<div class="t" style="left:91.34px;top:291.84px;font-size:12px;color:#000;font-weight:normal;font-style:normal;transform:scaleX(0.9222);">0791</div>
<div class="t" style="left:184.28px;top:291.84px;font-size:12px;color:#000;font-weight:normal;font-style:normal;transform:scaleX(0.8896);">25.028</div>
<div class="t" style="left:276.86px;top:291.84px;font-size:12px;color:#000;font-weight:normal;font-style:normal;transform:scaleX(0.9201);">1.077880217...</div>
<div class="t" style="left:368.03px;top:291.84px;font-size:12px;color:#000;font-weight:normal;font-style:normal;transform:scaleX(0.8947);">811.20</div>
<div class="t" style="left:461.18px;top:291.84px;font-size:12px;color:#000;font-weight:normal;font-style:normal;transform:scaleX(0.8960);">3042.00</div>
<div class="t" style="left:555.90px;top:291.84px;font-size:12px;color:#000;font-weight:normal;font-style:normal;transform:scaleX(0.8658);">EUR</div>
<div class="t" style="left:6.57px;top:310.84px;font-size:12px;color:#000;font-weight:normal;font-style:normal;transform:scaleX(1.0288);">QF</div>
<div class="t" style="left:91.34px;top:310.84px;font-size:12px;color:#000;font-weight:normal;font-style:normal;transform:scaleX(0.9222);">0005</div>
<div class="t" style="left:184.28px;top:310.84px;font-size:12px;color:#000;font-weight:normal;font-style:normal;transform:scaleX(0.8896);">37.890</div>
<div class="t" style="left:276.86px;top:310.84px;font-size:12px;color:#000;font-weight:normal;font-style:normal;transform:scaleX(0.9201);">8.525816289...</div>
<div class="t" style="left:368.03px;top:310.84px;font-size:12px;color:#000;font-weight:normal;font-style:normal;transform:scaleX(0.8947);">630.91</div>
<div class="t" style="left:461.18px;top:310.84px;font-size:12px;color:#000;font-weight:normal;font-style:normal;transform:scaleX(0.8960);">2365.92</div>
<div class="t" style="left:555.90px;top:310.84px;font-size:12px;color:#000;font-weight:normal;font-style:normal;transform:scaleX(0.8658);">AUD</div>
<div class="t" style="left:6.57px;top:329.84px;font-size:12px;color:#000;font-weight:normal;font-style:normal;transform:scaleX(1.0288);">DL</div>
<div class="t" style="left:91.34px;top:329.84px;font-size:12px;color:#000;font-weight:normal;font-style:normal;transform:scaleX(0.9222);">1984</div>
<div class="t" style="left:184.28px;top:329.84px;font-size:12px;color:#000;font-weight:normal;font-style:normal;transform:scaleX(0.8896);">37.442</div>
<div class="t" style="left:276.86px;top:329.84px;font-size:12px;color:#000;font-weight:normal;font-style:normal;transform:scaleX(0.9201);">4.570688387...</div>
<div class="t" style="left:368.03px;top:329.84px;font-size:12px;color:#000;font-weight:normal;font-style:normal;transform:scaleX(0.8947);">338.35</div>
<div class="t" style="left:461.18px;top:329.84px;font-size:12px;color:#000;font-weight:normal;font-style:normal;transform:scaleX(0.8960);">1268.82</div>
<div class="t" style="left:555.90px;top:329.84px;font-size:12px;color:#000;font-weight:normal;font-style:normal;transform:scaleX(0.8658);">USD</div>
<div class="t" style="left:6.57px;top:348.84px;font-size:12px;color:#000;font-weight:normal;font-style:normal;transform:scaleX(1.0288);">LH</div>
<div class="t" style="left:91.34px;top:348.84px;font-size:12px;color:#000;font-weight:normal;font-style:normal;transform:scaleX(0.9222);">2415</div>
<div class="t" style="left:184.28px;top:348.84px;font-size:12px;color:#000;font-weight:normal;font-style:normal;transform:scaleX(0.8896);">12.970</div>
<div class="t" style="left:276.86px;top:348.84px;font-size:12px;color:#000;font-weight:normal;font-style:normal;transform:scaleX(0.9201);">2.634428419...</div>
<div class="t" style="left:368.03px;top:348.84px;font-size:12px;color:#000;font-weight:normal;font-style:normal;transform:scaleX(0.8947);">193.60</div>
<div class="t" style="left:461.18px;top:348.84px;font-size:12px;color:#000;font-weight:normal;font-style:normal;transform:scaleX(0.8960);">726.00</div>
<div class="t" style="left:555.90px;top:348.84px;font-size:12px;color:#000;font-weight:normal;font-style:normal;transform:scaleX(0.8658);">EUR</div>
<div class="t" style="left:6.57px;top:367.84px;font-size:12px;color:#000;font-weight:normal;font-style:normal;transform:scaleX(1.0288);">SQ</div>
<div class="t" style="left:91.34px;top:367.84px;font-size:12px;color:#000;font-weight:normal;font-style:normal;transform:scaleX(0.9222);">0863</div>
<div class="t" style="left:184.28px;top:367.84px;font-size:12px;color:#000;font-weight:normal;font-style:normal;transform:scaleX(0.8896);">11.721</div>
<div class="t" style="left:276.86px;top:367.84px;font-size:12px;color:#000;font-weight:normal;font-style:normal;transform:scaleX(0.9201);">5.592212567...</div>
<div class="t" style="left:368.03px;top:367.84px;font-size:12px;color:#000;font-weight:normal;font-style:normal;transform:scaleX(0.8947);">410.39</div>
<div class="t" style="left:461.18px;top:367.84px;font-size:12px;color:#000;font-weight:normal;font-style:normal;transform:scaleX(0.8960);">1538.97</div>
<div class="t" style="left:555.90px;top:367.84px;font-size:12px;color:#000;font-weight:normal;font-style:normal;transform:scaleX(0.8658);">SGD</div>
<div class="t" style="left:6.57px;top:386.84px;font-size:12px;color:#000;font-weight:normal;font-style:normal;transform:scaleX(1.0288);">AZ</div>
<div class="t" style="left:91.34px;top:386.84px;font-size:12px;color:#000;font-weight:normal;font-style:normal;transform:scaleX(0.9222);">0790</div>
<div class="t" style="left:184.28px;top:386.84px;font-size:12px;color:#000;font-weight:normal;font-style:normal;transform:scaleX(0.8896);">33.254</div>
<div class="t" style="left:276.86px;top:386.84px;font-size:12px;color:#000;font-weight:normal;font-style:normal;transform:scaleX(0.9201);">1.111921102...</div>
<div class="t" style="left:368.03px;top:386.84px;font-size:12px;color:#000;font-weight:normal;font-style:normal;transform:scaleX(0.8947);">811.20</div>
<div class="t" style="left:461.18px;top:386.84px;font-size:12px;color:#000;font-weight:normal;font-style:normal;transform:scaleX(0.8960);">3042.00</div>
<div class="t" style="left:555.90px;top:386.84px;font-size:12px;color:#000;font-weight:normal;font-style:normal;transform:scaleX(0.8658);">EUR</div>
<div class="t" style="left:6.57px;top:405.84px;font-size:12px;color:#000;font-weight:normal;font-style:normal;transform:scaleX(1.0288);">DL</div>
<div class="t" style="left:91.34px;top:405.84px;font-size:12px;color:#000;font-weight:normal;font-style:normal;transform:scaleX(0.9222);">1699</div>
<div class="t" style="left:184.28px;top:405.84px;font-size:12px;color:#000;font-weight:normal;font-style:normal;transform:scaleX(0.8896);">45.092</div>
<div class="t" style="left:276.86px;top:405.84px;font-size:12px;color:#000;font-weight:normal;font-style:normal;transform:scaleX(0.9201);">4.438610780...</div>
<div class="t" style="left:368.03px;top:405.84px;font-size:12px;color:#000;font-weight:normal;font-style:normal;transform:scaleX(0.8947);">338.35</div>
<div class="t" style="left:461.18px;top:405.84px;font-size:12px;color:#000;font-weight:normal;font-style:normal;transform:scaleX(0.8960);">1268.82</div>
<div class="t" style="left:555.90px;top:405.84px;font-size:12px;color:#000;font-weight:normal;font-style:normal;transform:scaleX(0.8658);">USD</div>
<div class="t" style="left:6.57px;top:424.84px;font-size:12px;color:#000;font-weight:normal;font-style:normal;transform:scaleX(1.0288);">UA</div>
<div class="t" style="left:91.34px;top:424.84px;font-size:12px;color:#000;font-weight:normal;font-style:normal;transform:scaleX(0.9222);">3517</div>
<div class="t" style="left:184.28px;top:424.84px;font-size:12px;color:#000;font-weight:normal;font-style:normal;transform:scaleX(0.8896);">22.222</div>
<div class="t" style="left:276.86px;top:424.84px;font-size:12px;color:#000;font-weight:normal;font-style:normal;transform:scaleX(0.9201);">2.222222222...</div>
<div class="t" style="left:368.03px;top:424.84px;font-size:12px;color:#000;font-weight:normal;font-style:normal;transform:scaleX(0.8947);">338.35</div>
<div class="t" style="left:461.18px;top:424.84px;font-size:12px;color:#000;font-weight:normal;font-style:normal;transform:scaleX(0.8960);">1268.82</div>
<div class="t" style="left:555.90px;top:424.84px;font-size:12px;color:#000;font-weight:normal;font-style:normal;transform:scaleX(0.8658);">USD</div>
</div>
</body></html>
